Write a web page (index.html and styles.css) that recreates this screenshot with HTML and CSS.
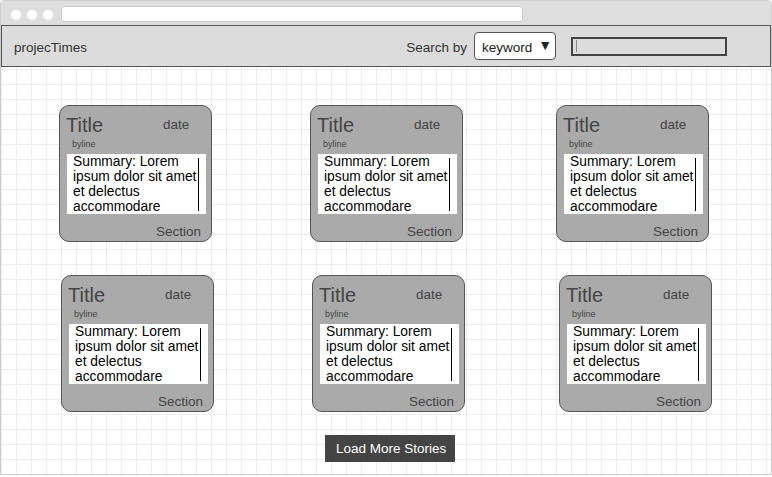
FILE: index.html
```html
<!DOCTYPE html>
<html lang="en">
<head>
    <meta charset="UTF-8">
    <meta name="viewport" content="width=device-width, initial-scale=1.0">
    <title>projecTimes</title>
    <link rel="stylesheet" href="styles.css">
</head>
<body>

<div class="window">
    <div class="chrome">
        <span class="dot"></span>
        <span class="dot"></span>
        <span class="dot"></span>
        <div class="url-bar"></div>
    </div>

    <header>
        <span class="brand">projecTimes</span>
        <div class="search">
            <span class="search-label">Search by</span>
            <div class="select">
                <span>keyword</span>
                <span class="arrow">&#9660;</span>
            </div>
            <div class="search-input"><span class="caret"></span></div>
        </div>
    </header>

    <main>
        <div class="row">
            <div class="card">
                <div class="card-head"><span class="title">Title</span><span class="date">date</span></div>
                <div class="byline">byline</div>
                <div class="summary">Summary: Lorem<br>ipsum dolor sit amet<br>et delectus<br>accommodare</div>
                <div class="section">Section</div>
            </div>
            <div class="card">
                <div class="card-head"><span class="title">Title</span><span class="date">date</span></div>
                <div class="byline">byline</div>
                <div class="summary">Summary: Lorem<br>ipsum dolor sit amet<br>et delectus<br>accommodare</div>
                <div class="section">Section</div>
            </div>
            <div class="card">
                <div class="card-head"><span class="title">Title</span><span class="date">date</span></div>
                <div class="byline">byline</div>
                <div class="summary">Summary: Lorem<br>ipsum dolor sit amet<br>et delectus<br>accommodare</div>
                <div class="section">Section</div>
            </div>
        </div>

        <div class="row row-two">
            <div class="card">
                <div class="card-head"><span class="title">Title</span><span class="date">date</span></div>
                <div class="byline">byline</div>
                <div class="summary">Summary: Lorem<br>ipsum dolor sit amet<br>et delectus<br>accommodare</div>
                <div class="section">Section</div>
            </div>
            <div class="card">
                <div class="card-head"><span class="title">Title</span><span class="date">date</span></div>
                <div class="byline">byline</div>
                <div class="summary">Summary: Lorem<br>ipsum dolor sit amet<br>et delectus<br>accommodare</div>
                <div class="section">Section</div>
            </div>
            <div class="card">
                <div class="card-head"><span class="title">Title</span><span class="date">date</span></div>
                <div class="byline">byline</div>
                <div class="summary">Summary: Lorem<br>ipsum dolor sit amet<br>et delectus<br>accommodare</div>
                <div class="section">Section</div>
            </div>
        </div>

        <button class="load-more" type="button">Load More Stories</button>
    </main>
</div>

</body>
</html>
```

FILE: styles.css
```css
body {
    margin: 0;
    background-color: #fff;
    font-family: "Liberation Sans", Arial, sans-serif;
}
.window {
    width: 772px;
    height: 475px;
    box-sizing: border-box;
    border: 1px solid #ccc;
    border-radius: 4px 4px 0 0;
    display: flex;
    flex-direction: column;
    overflow: hidden;
}
.chrome {
    height: 24px;
    background-color: #dedede;
    display: flex;
    align-items: flex-start;
    padding-left: 10px;
    flex-shrink: 0;
}
.dot {
    width: 10px;
    height: 10px;
    border-radius: 50%;
    background-color: #fff;
    margin-top: 9px;
    margin-right: 6px;
}
.url-bar {
    width: 460px;
    height: 14px;
    margin-top: 5px;
    margin-left: 2px;
    background-color: #fff;
    border: 1px solid #ccc;
    border-radius: 3px;
}
header {
    height: 42px;
    box-sizing: border-box;
    background-color: #dcdcdc;
    border: 1px solid #555;
    display: flex;
    align-items: center;
    padding: 0 43px 0 12px;
    color: #333;
    font-size: 13.5px;
    flex-shrink: 0;
}
.brand {
    padding-top: 2px;
}
.search {
    margin-left: auto;
    display: flex;
    align-items: center;
}
.search-label {
    padding-top: 2px;
    margin-right: 7px;
}
.select {
    width: 82px;
    height: 28px;
    box-sizing: border-box;
    background-color: #fff;
    border: 1px solid #555;
    border-radius: 4px;
    display: flex;
    align-items: flex-start;
    padding: 7px 0 0 7px;
    font-size: 13.5px;
    color: #222;
}
.arrow {
    font-size: 14px;
    margin-left: 6px;
    margin-top: -3px;
}
.search-input {
    width: 156px;
    height: 19px;
    box-sizing: border-box;
    border: 2px solid #444;
    margin-left: 15px;
    display: flex;
    align-items: center;
    padding-left: 3px;
}
.caret {
    width: 1px;
    height: 12px;
    background-color: #888;
}
main {
    flex: 1;
    padding-top: 38px;
    background-color: #fff;
    background-image: linear-gradient(to right, #ececec 1px, transparent 1px), linear-gradient(to bottom, #ececec 1px, transparent 1px);
    background-size: 15px 15px;
    background-position: 0 2px;
}
.row {
    display: flex;
    padding-left: 58px;
}
.row-two {
    padding-left: 60px;
    margin-top: 33px;
}
.card {
    width: 153px;
    height: 137px;
    box-sizing: border-box;
    background-color: #aaa;
    border: 1px solid #555;
    border-radius: 10px;
    padding: 6px 6px 0 6px;
    display: flex;
    flex-direction: column;
    color: #444;
}
.card:nth-child(2) {
    margin-left: 98px;
}
.card:nth-child(3) {
    margin-left: 93px;
}
.row-two .card:nth-child(3) {
    margin-left: 94px;
}
.card-head {
    height: 27px;
    display: flex;
    align-items: flex-start;
}
.title {
    font-size: 20px;
    line-height: 26px;
}
.date {
    font-size: 13.5px;
    line-height: 16px;
    margin-top: 5px;
    margin-left: 60px;
}
.byline {
    font-size: 9px;
    line-height: 11px;
    margin-left: 6px;
}
.summary {
    position: relative;
    width: 139px;
    height: 60px;
    box-sizing: border-box;
    margin: 4px 0 0 1px;
    padding-left: 6px;
    background-color: #fff;
    color: #000;
    font-size: 13.8px;
    line-height: 15px;
    white-space: nowrap;
    overflow: hidden;
}
.summary::after {
    content: "";
    position: absolute;
    left: 131px;
    top: 4px;
    bottom: 3px;
    width: 1px;
    background-color: #000;
}
.section {
    font-size: 13.5px;
    line-height: 16px;
    margin-top: 10px;
    text-align: right;
    padding-right: 4px;
}
.load-more {
    display: block;
    margin: 23px 0 0 324px;
    width: 130px;
    height: 27px;
    border: none;
    border-radius: 0;
    background-color: #444;
    color: #fff;
    font-family: "Liberation Sans", Arial, sans-serif;
    font-size: 13.5px;
    text-align: left;
    padding: 0 0 0 11px;
}
```
